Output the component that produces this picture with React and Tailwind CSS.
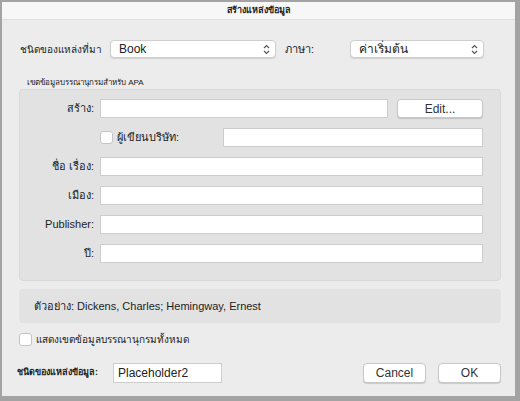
import React from "react";

const font = { fontFamily: '"Liberation Sans", "Noto Sans", Tahoma, sans-serif' };

function Arrows() {
  return (
    <svg width="7" height="11" viewBox="0 0 7 11" className="shrink-0">
      <path d="M1 4 L3.5 1.5 L6 4" fill="none" stroke="#555" strokeWidth="1.1" />
      <path d="M1 7 L3.5 9.5 L6 7" fill="none" stroke="#555" strokeWidth="1.1" />
    </svg>
  );
}

function Select({ value, className }) {
  return (
    <div
      className={`h-[18px] flex items-center justify-between bg-white border border-[#cfcfcf] rounded-[4px] shadow-[0_1px_1px_rgba(0,0,0,0.12)] pl-[8px] pr-[5px] text-[12px] text-[#222] ${className}`}
    >
      <span>{value}</span>
      <Arrows />
    </div>
  );
}

function Field({ className = "", children }) {
  return (
    <div
      className={`h-[19px] bg-white border border-[#cdcdcd] flex items-center px-[4px] text-[12px] ${className}`}
    >
      {children}
    </div>
  );
}

function Button({ children, className = "" }) {
  return (
    <div
      className={`h-[19px] flex items-center justify-center bg-white border border-[#c8c8c8] rounded-[4px] shadow-[0_1px_1px_rgba(0,0,0,0.15)] text-[12px] text-[#333] ${className}`}
    >
      {children}
    </div>
  );
}

function Check() {
  return (
    <div className="w-[13px] h-[13px] bg-white border border-[#c4c4c4] rounded-[3px] shrink-0" />
  );
}

function Row({ label, children }) {
  return (
    <div className="flex items-center h-[19px]">
      <div className="w-[72px] pr-[6px] text-right text-[11px] text-[#222] whitespace-nowrap">
        {label}
      </div>
      <div className="flex-1 flex items-center">{children}</div>
    </div>
  );
}

export default function App() {
  return (
    <div
      className="w-[520px] h-[401px] bg-[#a3a3a3] pt-[2px] pl-[2px] pr-[5px] pb-[5px]"
      style={font}
    >
      <div className="h-full bg-[#ececec] flex flex-col">
        <div className="h-[18px] bg-[#f7f7f7] border-b border-[#dedede] flex items-center justify-center text-[9px] font-bold text-[#222]">
          สร้างแหล่งข้อมูล
        </div>

        <div className="pl-[17px] pr-[14px] flex flex-col">
          <div className="mt-[20px] flex items-center h-[18px]">
            <div className="w-[91px] pl-[1px] text-[10px] text-[#222] whitespace-nowrap">
              ชนิดของแหล่งที่มา
            </div>
            <Select value="Book" className="w-[166px]" />
            <div className="w-[74px] pl-[9px] text-[11px] text-[#222]">ภาษา:</div>
            <Select value="ค่าเริ่มต้น" className="w-[134px]" />
          </div>

          <div className="mt-[19px] pl-[8px] text-[8px] text-[#222] h-[11px] leading-[11px]">
            เขตข้อมูลบรรณานุกรมสำหรับ APA
          </div>

          <div className="mt-[1px] h-[192px] bg-[#e2e2e2] border border-[#d9d9d9] rounded-[4px] pt-[9px] pl-[8px] pr-[17px] flex flex-col gap-[10px]">
            <Row label="สร้าง:">
              <Field className="w-[288px]" />
              <Button className="ml-[9px] flex-1">Edit...</Button>
            </Row>
            <div className="flex items-center h-[19px]">
              <div className="w-[72px]" />
              <Check />
              <div className="ml-[4px] w-[106px] text-[11px] text-[#222] whitespace-nowrap">
                ผู้เขียนบริษัท:
              </div>
              <Field className="flex-1" />
            </div>
            <Row label="ชื่อ เรื่อง:">
              <Field className="flex-1" />
            </Row>
            <Row label="เมือง:">
              <Field className="flex-1" />
            </Row>
            <Row label="Publisher:">
              <Field className="flex-1" />
            </Row>
            <Row label="ปี:">
              <Field className="flex-1" />
            </Row>
          </div>

          <div className="mt-[8px] h-[34px] bg-[#e2e2e2] rounded-[4px] flex items-center pl-[15px] text-[11px] text-[#222]">
            ตัวอย่าง: Dickens, Charles; Hemingway, Ernest
          </div>

          <div className="mt-[9px] flex items-center h-[14px]">
            <Check />
            <div className="ml-[4px] text-[10px] text-[#222]">แสดงเขตข้อมูลบรรณานุกรมทั้งหมด</div>
          </div>

          <div className="mt-[17px] flex items-center h-[20px]">
            <div className="w-[96px] text-[9px] font-bold text-[#222] whitespace-nowrap -ml-[2px]">
              ชนิดของแหล่งข้อมูล:
            </div>
            <Field className="w-[109px] h-[20px] text-[#222]">Placeholder2</Field>
            <div className="flex-1" />
            <Button className="w-[63px] h-[20px]">Cancel</Button>
            <Button className="ml-[12px] w-[63px] h-[20px]">OK</Button>
          </div>
        </div>
      </div>
    </div>
  );
}
